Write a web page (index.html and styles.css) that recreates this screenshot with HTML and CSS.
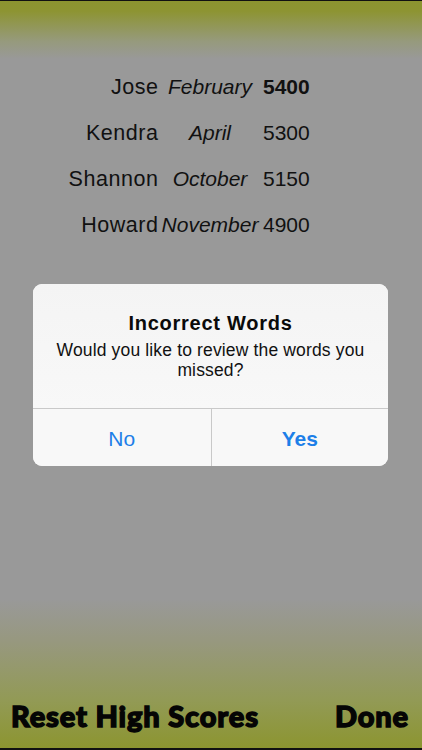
FILE: index.html
```html
<!DOCTYPE html>
<html>
<head>
<meta charset="utf-8">
<link rel="stylesheet" href="styles.css">
</head>
<body>
<div class="screen">
  <div class="scores">
    <div class="name">Jose</div><div class="month">February</div><div class="score best">5400</div>
    <div class="name">Kendra</div><div class="month">April</div><div class="score">5300</div>
    <div class="name">Shannon</div><div class="month">October</div><div class="score">5150</div>
    <div class="name">Howard</div><div class="month">November</div><div class="score">4900</div>
  </div>
  <div class="footer">
    <span class="action">Reset High Scores</span>
    <span class="action">Done</span>
  </div>
  <div class="alert">
    <div class="alert-body">
      <div class="alert-title">Incorrect Words</div>
      <div class="alert-msg">Would you like to review the words you missed?</div>
    </div>
    <div class="alert-buttons">
      <div class="btn">No</div>
      <div class="btn strong">Yes</div>
    </div>
  </div>
</div>
</body>
</html>
```
FILE: styles.css
```css
html, body {
  margin: 0;
  padding: 0;
}
body {
  font-family: "Liberation Sans", Arial, sans-serif;
}
.screen {
  position: relative;
  width: 422px;
  height: 750px;
  box-sizing: border-box;
  border-top: 1px solid #111;
  border-bottom: 2px solid #111;
  background: linear-gradient(to bottom,
    #8c9430 0px, #8d9432 10px, #969a7c 40px, #999999 58px,
    #999999 598px, #97987f 640px, #929a55 700px, #8c9530 747px);
  display: flex;
  flex-direction: column;
  overflow: hidden;
}
.scores {
  display: grid;
  grid-template-columns: 158px 104px 1fr;
  align-items: baseline;
  row-gap: 22px;
  padding-top: 74px;
  font-size: 21px;
  line-height: 23px;
  color: #111;
}
.name {
  text-align: right;
  font-size: 21.5px;
  letter-spacing: 0.55px;
  margin-right: -0.55px;
}
.month {
  text-align: center;
  font-style: italic;
}
.score {
  padding-left: 1px;
}
.best {
  font-weight: bold;
}
.footer {
  margin-top: auto;
  display: flex;
  justify-content: space-between;
  align-items: baseline;
  padding: 0 13px 16px 11px;
  font-family: Lato, "Liberation Sans", sans-serif;
  font-weight: 900;
  font-size: 29px;
  line-height: 32px;
  letter-spacing: 0.85px;
  color: #050505;
  -webkit-text-stroke: 1.4px #050505;
}
.alert {
  position: absolute;
  left: 33px;
  top: 283px;
  width: 355px;
  border-radius: 9px;
  background: #f6f6f6;
  overflow: hidden;
}
.alert-body {
  height: 124px;
  box-sizing: border-box;
  padding: 27px 12px 0;
  text-align: center;
  background: linear-gradient(to bottom, #f4f4f4, #f8f8f8);
}
.alert-title {
  font-size: 20px;
  line-height: 24px;
  font-weight: bold;
  letter-spacing: 0.75px;
  color: #0a0a0a;
  margin-bottom: 5px;
}
.alert-msg {
  font-size: 17.5px;
  line-height: 20px;
  letter-spacing: 0.15px;
  color: #111;
}
.alert-buttons {
  display: grid;
  grid-template-columns: 1fr 1fr;
  border-top: 1px solid #c9c9c9;
  height: 57px;
  background: #f8f8f8;
}
.btn {
  display: flex;
  align-items: center;
  justify-content: center;
  padding-top: 2px;
  font-size: 21px;
  color: #1d7fe8;
}
.btn + .btn {
  border-left: 1px solid #c9c9c9;
}
.strong {
  font-weight: bold;
}
```
